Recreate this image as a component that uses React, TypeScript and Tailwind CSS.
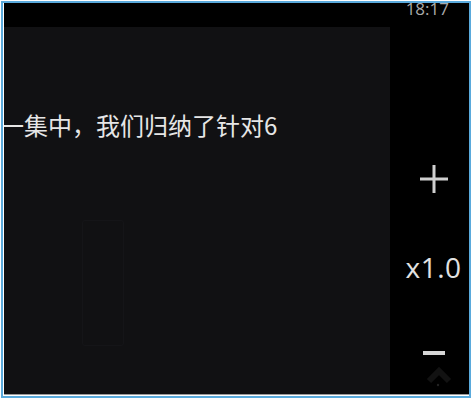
import React from 'react';

const cjk = { fontFamily: '"Noto Sans CJK SC", "Noto Sans", sans-serif' };
const latin = { fontFamily: '"Open Sans", "Noto Sans", sans-serif' };

const ZoomColumn: React.FC = () => (
  <div className="flex w-[78px] flex-col items-center bg-black pl-[9px]">
    {/* 放大 */}
    <svg width="28" height="28" viewBox="0 0 28 28" className="mt-[138px]">
      <path d="M14 0 V28 M0 14 H28" stroke="#cfcfcf" strokeWidth="3" />
    </svg>
    <div className="mt-[60px] text-[28px] leading-none tracking-[0.5px] text-[#e2e2e2]" style={latin}>
      x1.0
    </div>
    {/* 缩小 */}
    <div className="mt-[70px] h-[4px] w-[22px] bg-[#d6d6d6]" />
    <svg width="30" height="28" viewBox="0 0 30 28" className="ml-[10px] mt-[6px]">
      <path d="M5 20 L15 10 L25 20" stroke="#121212" strokeWidth="6" fill="none" />
      <circle cx="14" cy="24" r="1.2" fill="#222" />
    </svg>
  </div>
);

export default function App() {
  return (
    <div className="h-[400px] w-[473px] bg-white pb-[2px] pl-px pr-[2px] pt-px">
      <div className="flex h-full flex-col border-2 border-[#5aaadc] bg-white pb-px pl-px">
        <div className="flex flex-1 flex-col overflow-hidden border-b border-[#9a9a9a] bg-black">
          {/* 状态栏 */}
          <div className="flex h-[24px] justify-end pr-[20px]">
            <span className="-mt-[3px] text-[17px] leading-none text-[#a9a9a9]" style={latin}>
              18:17
            </span>
          </div>
          <div className="flex flex-1">
            {/* 视频画面 */}
            <div className="relative w-[386px] overflow-hidden bg-[#111113] pt-[86px]">
              <div className="-ml-[4px] whitespace-nowrap text-[24px] leading-none text-[#e6e6e6]" style={cjk}>
                一集中，我们归纳了针对6
              </div>
              <div className="absolute left-[78px] top-[193px] h-[126px] w-[42px] rounded-[3px] border border-[#151518]" />
            </div>
            <ZoomColumn />
          </div>
        </div>
      </div>
    </div>
  );
}
